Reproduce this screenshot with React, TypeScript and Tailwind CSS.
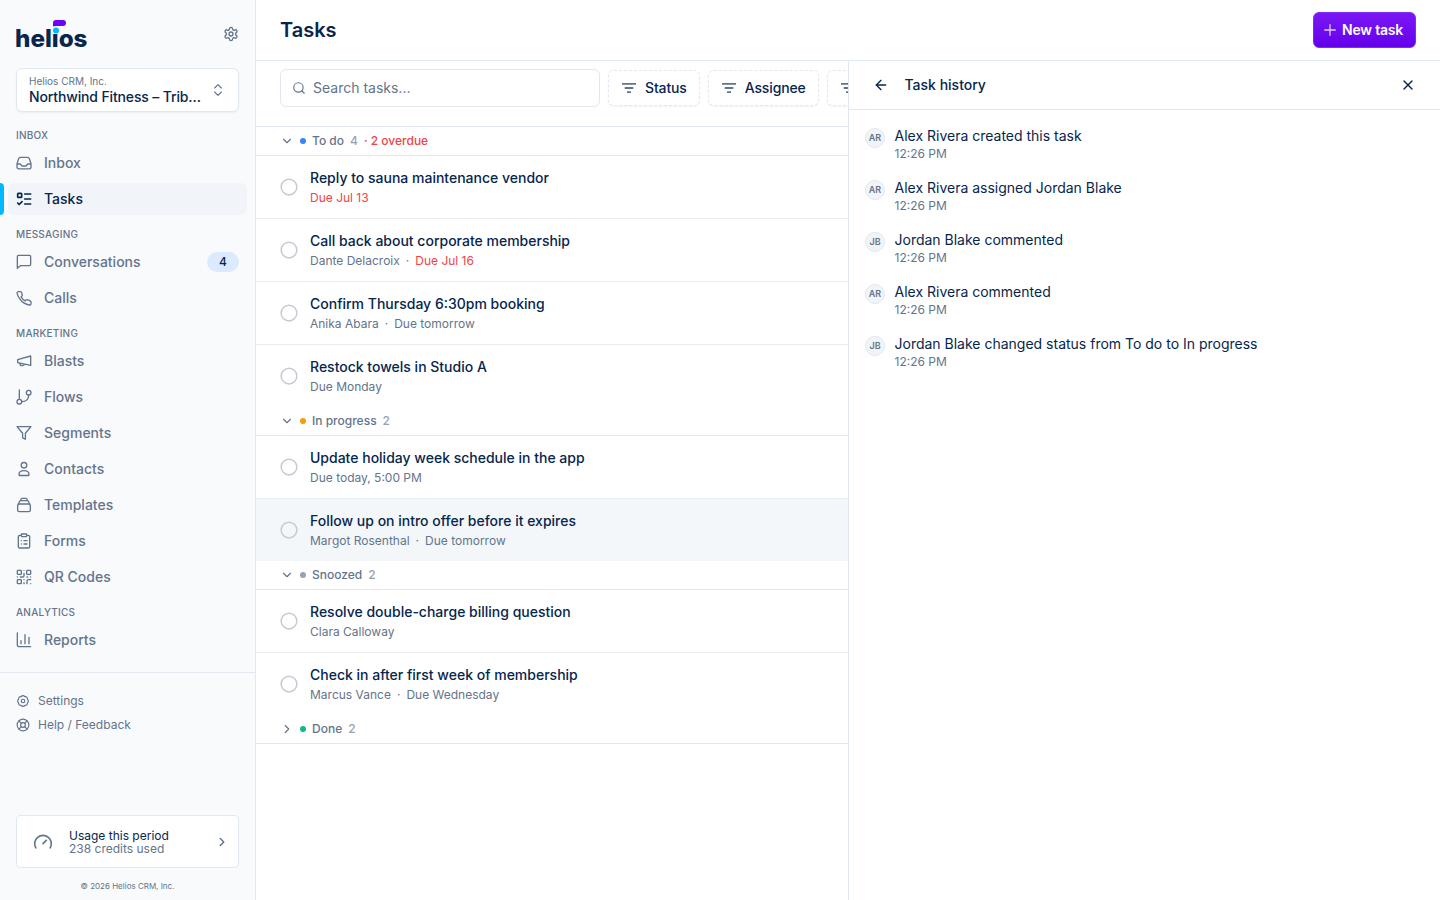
import { ReactNode } from 'react'
import {
  ArrowLeft,
  ChevronDown,
  ChevronRight,
  ChevronsUpDown,
  LifeBuoy,
  Plus,
  Search,
  X,
} from 'lucide-react'

type IconProps = { children: ReactNode; size?: number; strokeWidth?: number }
type NavItem = { label: string; icon: ReactNode; active?: boolean; badge?: string }
type Task = { title: string; person?: string; due?: string; overdue?: boolean; selected?: boolean }
type Group = { name: string; count: number; dot: string; overdue?: string; tasks: Task[] }

const Icon = ({ children, size = 16, strokeWidth = 2 }: IconProps): JSX.Element => (
  <svg
    width={size}
    height={size}
    viewBox="0 0 24 24"
    fill="none"
    stroke="currentColor"
    strokeWidth={strokeWidth}
    strokeLinecap="round"
    strokeLinejoin="round"
    aria-hidden="true"
    className="shrink-0"
  >
    {children}
  </svg>
)

const GearIcon = (): JSX.Element => (
  <Icon>
    <path d="M12.22 2h-.44a2 2 0 0 0-2 2v.18a2 2 0 0 1-1 1.73l-.43.25a2 2 0 0 1-2 0l-.15-.08a2 2 0 0 0-2.73.73l-.22.38a2 2 0 0 0 .73 2.73l.15.1a2 2 0 0 1 1 1.72v.51a2 2 0 0 1-1 1.74l-.15.09a2 2 0 0 0-.73 2.73l.22.38a2 2 0 0 0 2.73.73l.15-.08a2 2 0 0 1 2 0l.43.25a2 2 0 0 1 1 1.73V20a2 2 0 0 0 2 2h.44a2 2 0 0 0 2-2v-.18a2 2 0 0 1 1-1.73l.43-.25a2 2 0 0 1 2 0l.15.08a2 2 0 0 0 2.73-.73l.22-.39a2 2 0 0 0-.73-2.73l-.15-.08a2 2 0 0 1-1-1.74v-.5a2 2 0 0 1 1-1.74l.15-.09a2 2 0 0 0 .73-2.73l-.22-.38a2 2 0 0 0-2.73-.73l-.15.08a2 2 0 0 1-2 0l-.43-.25a2 2 0 0 1-1-1.73V4a2 2 0 0 0-2-2z" />
    <circle cx="12" cy="12" r="3" />
  </Icon>
)

const sections: { title: string; items: NavItem[] }[] = [
  {
    title: 'Inbox',
    items: [
      {
        label: 'Inbox',
        icon: (
          <Icon>
            <path d="M1.5 13.5h4.2c.9 0 1.6.5 2 1.2l.3.6c.4.8 1.2 1.2 2 1.2h4c.8 0 1.6-.4 2-1.2l.3-.6c.4-.7 1.1-1.2 2-1.2h4.2M1.5 13.5V18A2.8 2.8 0 0 0 4.3 20.8h15.4A2.8 2.8 0 0 0 22.5 18v-4.5c0-.4-.1-.7-.2-1l-2.3-7a3 3 0 0 0-2.8-2H6.8a3 3 0 0 0-2.8 2l-2.3 7c-.1.3-.2.6-.2 1z" />
          </Icon>
        ),
      },
      {
        label: 'Tasks',
        active: true,
        icon: (
          <Icon strokeWidth={2.5}>
            <rect x="2.5" y="3.5" width="6" height="6" rx="1" />
            <path d="m2.5 18 2.3 2.3L9 16M13 4.5h9M13 12h9M13 19.5h9" />
          </Icon>
        ),
      },
    ],
  },
  {
    title: 'Messaging',
    items: [
      {
        label: 'Conversations',
        badge: '4',
        icon: (
          <Icon>
            <path d="M22 15.5a2 2 0 0 1-2 2H6.5l-4.5 4V4a2 2 0 0 1 2-2h16a2 2 0 0 1 2 2z" />
          </Icon>
        ),
      },
      {
        label: 'Calls',
        icon: (
          <Icon>
            <path d="M22.5 17.5v3a2 2 0 0 1-2.2 2 20 20 0 0 1-8.6-3.1 19.5 19.5 0 0 1-6-6A20 20 0 0 1 1.6 4.7a2 2 0 0 1 2-2.2h3a2 2 0 0 1 2 1.7 13 13 0 0 0 .7 2.8 2 2 0 0 1-.4 2.1L7.6 10.4a16 16 0 0 0 6 6l1.3-1.3a2 2 0 0 1 2.1-.4 13 13 0 0 0 2.8.7 2 2 0 0 1 1.7 2z" />
          </Icon>
        ),
      },
    ],
  },
  {
    title: 'Marketing',
    items: [
      {
        label: 'Blasts',
        icon: (
          <Icon>
            <path d="M22 4.5 2.5 10v4.5l19.5 4zM6 15.3v.7a3 3 0 0 0 3 3h.5a3 3 0 0 0 3-2.4" />
          </Icon>
        ),
      },
      {
        label: 'Flows',
        icon: (
          <Icon>
            <path d="M5 1.5v14M19 9c0 6-4 10-10.5 10" />
            <circle cx="19" cy="5.5" r="3.5" />
            <circle cx="5" cy="19" r="3.5" />
          </Icon>
        ),
      },
      {
        label: 'Segments',
        icon: (
          <Icon>
            <path d="M22.5 2.5h-21l8.4 9.9v6.9l4.2 2.1v-9z" />
          </Icon>
        ),
      },
      {
        label: 'Contacts',
        icon: (
          <Icon>
            <circle cx="12" cy="6.5" r="4.2" />
            <path d="M12 14.5c-4.5 0-7.5 2.5-7.5 6 0 .8.5 1.3 1.2 1.3h12.6c.7 0 1.2-.5 1.2-1.3 0-3.5-3-6-7.5-6z" />
          </Icon>
        ),
      },
      {
        label: 'Templates',
        icon: (
          <Icon>
            <rect x="2.5" y="10.5" width="19" height="11.5" rx="2.5" />
            <path d="M3.5 11l2-4.5A1.7 1.7 0 0 1 7 5.5h10a1.7 1.7 0 0 1 1.5 1l2 4.5M7 5.5l.4-1.6A2 2 0 0 1 9.3 2h5.4a2 2 0 0 1 1.9 1.9l.4 1.6" />
          </Icon>
        ),
      },
      {
        label: 'Forms',
        icon: (
          <Icon>
            <rect x="8" y="1.5" width="8" height="4" rx="1" />
            <path d="M16 3.5h2.5a2 2 0 0 1 2 2v15a2 2 0 0 1-2 2h-13a2 2 0 0 1-2-2v-15a2 2 0 0 1 2-2H8M12 11.5h4.5M12 16.5h4.5M8 11.5h.01M8 16.5h.01" />
          </Icon>
        ),
      },
      {
        label: 'QR Codes',
        icon: (
          <Icon>
            <rect x="2" y="2" width="6" height="6" rx="1" />
            <rect x="16" y="2" width="6" height="6" rx="1" />
            <rect x="2" y="16" width="6" height="6" rx="1" />
            <path d="M22 16h-3.5a2 2 0 0 0-2 2v4M22 22v.01M12 6.5V10a2 2 0 0 1-2 2H6.5M2 12h.01M12 2h.01M12 16v.01M16.5 12h1M22 12v.01M12 22v-1.5" />
          </Icon>
        ),
      },
    ],
  },
  {
    title: 'Analytics',
    items: [
      {
        label: 'Reports',
        icon: (
          <Icon>
            <path d="M2 1.5V20a2 2 0 0 0 2 2h18M19.5 17.5V8M13.5 17.5V4M7.5 17.5V13" />
          </Icon>
        ),
      },
    ],
  },
]

const groups: Group[] = [
  {
    name: 'To do',
    count: 4,
    dot: 'bg-[#3b82f6]',
    overdue: '· 2 overdue',
    tasks: [
      { title: 'Reply to sauna maintenance vendor', due: 'Due Jul 13', overdue: true },
      { title: 'Call back about corporate membership', person: 'Dante Delacroix', due: 'Due Jul 16', overdue: true },
      { title: 'Confirm Thursday 6:30pm booking', person: 'Anika Abara', due: 'Due tomorrow' },
      { title: 'Restock towels in Studio A', due: 'Due Monday' },
    ],
  },
  {
    name: 'In progress',
    count: 2,
    dot: 'bg-[#f59e0b]',
    tasks: [
      { title: 'Update holiday week schedule in the app', due: 'Due today, 5:00 PM' },
      { title: 'Follow up on intro offer before it expires', person: 'Margot Rosenthal', due: 'Due tomorrow', selected: true },
    ],
  },
  {
    name: 'Snoozed',
    count: 2,
    dot: 'bg-[#94a3b8]',
    tasks: [
      { title: 'Resolve double-charge billing question', person: 'Clara Calloway' },
      { title: 'Check in after first week of membership', person: 'Marcus Vance', due: 'Due Wednesday' },
    ],
  },
  { name: 'Done', count: 2, dot: 'bg-[#10b981]', tasks: [] },
]

const history = [
  { initials: 'AR', text: 'Alex Rivera created this task' },
  { initials: 'AR', text: 'Alex Rivera assigned Jordan Blake' },
  { initials: 'JB', text: 'Jordan Blake commented' },
  { initials: 'AR', text: 'Alex Rivera commented' },
  { initials: 'JB', text: 'Jordan Blake changed status from To do to In progress' },
]

const Logo = (): JSX.Element => (
  <svg width="78" height="34" viewBox="0 0 78 34" role="img" aria-label="helios" className="overflow-visible">
    <text x="-1" y="29.2" fontFamily="Inter, sans-serif" fontSize="24" fontWeight="800" textLength="72.5" lengthAdjust="spacingAndGlyphs" fill="#06264d">
      helios
    </text>
    <rect x="35.5" y="8" width="8.5" height="7.4" fill="#f9fafc" />
    <circle cx="40" cy="12.5" r="3" fill="#00b8ff" />
    <path d="M37 8.5V5a3 3 0 0 1 3-3h7a3 3 0 0 1 0 6h-7.5z" fill="#6d00f5" />
  </svg>
)

const Sidebar = (): JSX.Element => (
  <aside className="flex w-64 shrink-0 flex-col border-r border-[#e2e8f0] bg-[#f9fafc] text-[#64748b]">
    <div className="flex items-start justify-between px-4 pt-[18px]">
      <Logo />
      <div className="pt-2">
        <GearIcon />
      </div>
    </div>
    <button type="button" className="mx-4 mt-4 flex h-11 items-center rounded-md border border-[#e2e8f0] bg-white px-3 text-left shadow-xs">
      <span className="min-w-0 flex-1 pt-px">
        <span className="block text-[10px] leading-3">Helios CRM, Inc.</span>
        <span className="mt-px block text-sm leading-[18px] font-medium tracking-[-0.01em] text-[#06264d]">Northwind Fitness – Trib…</span>
      </span>
      <ChevronsUpDown size={16} strokeWidth={1.75} className="ml-1 shrink-0" />
    </button>
    <nav className="pt-1">
      {sections.map((section) => (
        <div key={section.title}>
          <h2 className="px-4 pt-[11px] pb-1 text-[10px] leading-4 font-medium tracking-[0.25px] uppercase">{section.title}</h2>
          <ul className="flex flex-col gap-1">
            {section.items.map((item) => (
              <li key={item.label} className="flex">
                <span className={item.active ? 'h-8 w-1 rounded-r bg-[#00b8ff]' : 'h-8 w-1'} />
                <a
                  className={
                    item.active
                      ? 'mr-2 ml-1 flex h-8 flex-1 items-center gap-3 rounded-md bg-[#f1f5f9] px-2 text-sm font-medium text-[#06264d]'
                      : 'mr-2 ml-1 flex h-8 flex-1 items-center gap-3 rounded-md px-2 text-sm font-medium'
                  }
                >
                  {item.icon}
                  <span className="flex-1">{item.label}</span>
                  {item.badge && (
                    <span className="flex h-5 w-8 items-center justify-center rounded-full bg-[#dbeafe] text-xs text-[#06264d]">{item.badge}</span>
                  )}
                </a>
              </li>
            ))}
          </ul>
        </div>
      ))}
    </nav>
    <div className="mt-4 flex flex-col border-t border-[#e2e8f0] px-4 pt-4 text-xs">
      <a className="flex h-6 items-center gap-2">
        <Icon size={14}>
          <path d="M19.5 8.9a3.7 3.7 0 0 1 0 6.2a3.7 3.7 0 0 1-4.4 4.4a3.7 3.7 0 0 1-6.2 0a3.7 3.7 0 0 1-4.4-4.4a3.7 3.7 0 0 1 0-6.2a3.7 3.7 0 0 1 4.4-4.4a3.7 3.7 0 0 1 6.2 0a3.7 3.7 0 0 1 4.4 4.4z" />
          <circle cx="12" cy="12" r="3" />
        </Icon>
        Settings
      </a>
      <a className="flex h-6 items-center gap-2">
        <LifeBuoy size={14} />
        Help / Feedback
      </a>
    </div>
    <div className="mx-4 mt-auto flex h-[53px] items-center rounded border border-[#e2e8f0] bg-white px-4">
      <Icon size={20}>
        <path d="m12 14 4-4M3.34 19a10 10 0 1 1 17.32 0" />
      </Icon>
      <div className="ml-4 flex-1 text-xs leading-[13px]">
        <p className="text-[#06264d]">Usage this period</p>
        <p>238 credits used</p>
      </div>
      <ChevronRight size={14} strokeWidth={2.5} className="-mr-[7px]" />
    </div>
    <p className="pt-3 pb-2 text-center text-[8px] leading-3">© 2026 Helios CRM, Inc.</p>
  </aside>
)

const FilterButton = ({ label }: { label?: string }): JSX.Element => (
  <button type="button" className="flex h-9 shrink-0 items-center gap-2 rounded-md border border-dashed border-[#e2e8f0] bg-white px-3 text-sm font-medium tracking-[-0.01em] text-[#06264d] shadow-xs">
    <svg width="16" height="16" viewBox="0 0 16 16" stroke="#64748b" strokeWidth="1.8" aria-hidden="true">
      <path d="M1 3.8h14M3.7 8h8.6M6 12.2h4" />
    </svg>
    {label}
  </button>
)

const TaskRow = ({ task, last }: { task: Task; last: boolean }): JSX.Element => (
  <li
    className={`flex items-center gap-3 px-6 ${last ? 'h-[62px]' : 'h-[63px] border-b border-[#e8ecf1]'} ${task.selected ? 'bg-[#f3f7fa]' : ''}`}
  >
    <Icon size={18}>
      <circle cx="12" cy="12" r="10.5" stroke="#c5cad3" strokeWidth="2" />
    </Icon>
    <div className="pt-0.5">
      <p className="text-sm leading-5 font-medium text-[#06264d]">{task.title}</p>
      <p className="flex gap-1.5 text-xs leading-5 text-[#64748b]">
        {task.person && <span>{task.person}</span>}
        {task.person && task.due && <span>·</span>}
        {task.due && <span className={task.overdue ? 'text-[#ef4444]' : ''}>{task.due}</span>}
      </p>
    </div>
  </li>
)

const TaskList = (): JSX.Element => (
  <section className="flex w-[592px] shrink-0 flex-col overflow-hidden">
    <div className="flex items-center gap-2 overflow-hidden pt-2 pb-[19px] pl-6">
      <div className="flex h-[38px] w-80 shrink-0 items-center gap-[7px] rounded-md border border-[#e2e8f0] px-[11px] text-sm text-[#64748b]">
        <Search size={14} className="shrink-0" />
        Search tasks...
      </div>
      <FilterButton label="Status" />
      <FilterButton label="Assignee" />
      <FilterButton />
    </div>
    <div className="border-t border-[#e2e8f0]">
      {groups.map((group) => (
        <div key={group.name}>
          <h3 className="flex h-[29px] items-center gap-1.5 border-b border-[#e2e8f0] px-6 text-xs font-medium text-[#64748b]">
            {group.tasks.length > 0 ? <ChevronDown size={14} /> : <ChevronRight size={14} />}
            <span className={`size-1.5 rounded-full ${group.dot}`} />
            <span>{group.name}</span>
            <span className="text-[#94a3b8]">{group.count}</span>
            {group.overdue && <span className="text-[#ef4444]">{group.overdue}</span>}
          </h3>
          <ul>
            {group.tasks.map((task, index) => (
              <TaskRow key={task.title} task={task} last={index === group.tasks.length - 1} />
            ))}
          </ul>
        </div>
      ))}
    </div>
  </section>
)

const HistoryPanel = (): JSX.Element => (
  <section className="flex-1 border-l border-[#e2e8f0] text-[#06264d]">
    <header className="flex h-[49px] items-center border-b border-[#e2e8f0] px-6">
      <ArrowLeft size={16} />
      <h2 className="ml-[15.5px] flex-1 text-sm font-medium">Task history</h2>
      <X size={16} />
    </header>
    <ol className="flex flex-col gap-4 px-4 pt-4">
      {history.map((event, index) => (
        <li key={index} className="flex gap-[9.5px]">
          <span className="mt-0.5 flex size-5 items-center justify-center rounded-full border border-[#e2e8f0] bg-[#f1f5f9] text-[9px] font-semibold text-[#64748b]">
            {event.initials}
          </span>
          <div>
            <p className="text-sm leading-5">{event.text}</p>
            <p className="text-xs leading-4 text-[#64748b]">12:26 PM</p>
          </div>
        </li>
      ))}
    </ol>
  </section>
)

const App = (): JSX.Element => (
  <div className="flex h-screen overflow-hidden bg-white font-[Inter,sans-serif]">
    <Sidebar />
    <main className="flex min-w-0 flex-1 flex-col">
      <header className="flex h-[61px] shrink-0 items-center justify-between border-b border-[#e2e8f0] px-6">
        <h1 className="text-xl font-semibold text-[#06264d]">Tasks</h1>
        <button type="button" className="flex h-9 w-[103px] items-center gap-[3px] rounded-md border border-[#7c2cf5] bg-linear-to-b from-[#7b16f5] to-[#6400ea] pl-[7px] text-sm font-semibold tracking-[-0.015em] whitespace-nowrap text-white">
          <Plus size={18} strokeWidth={1.75} className="shrink-0 opacity-80" />
          New task
        </button>
      </header>
      <div className="flex min-h-0 flex-1">
        <TaskList />
        <HistoryPanel />
      </div>
    </main>
  </div>
)

export default App
